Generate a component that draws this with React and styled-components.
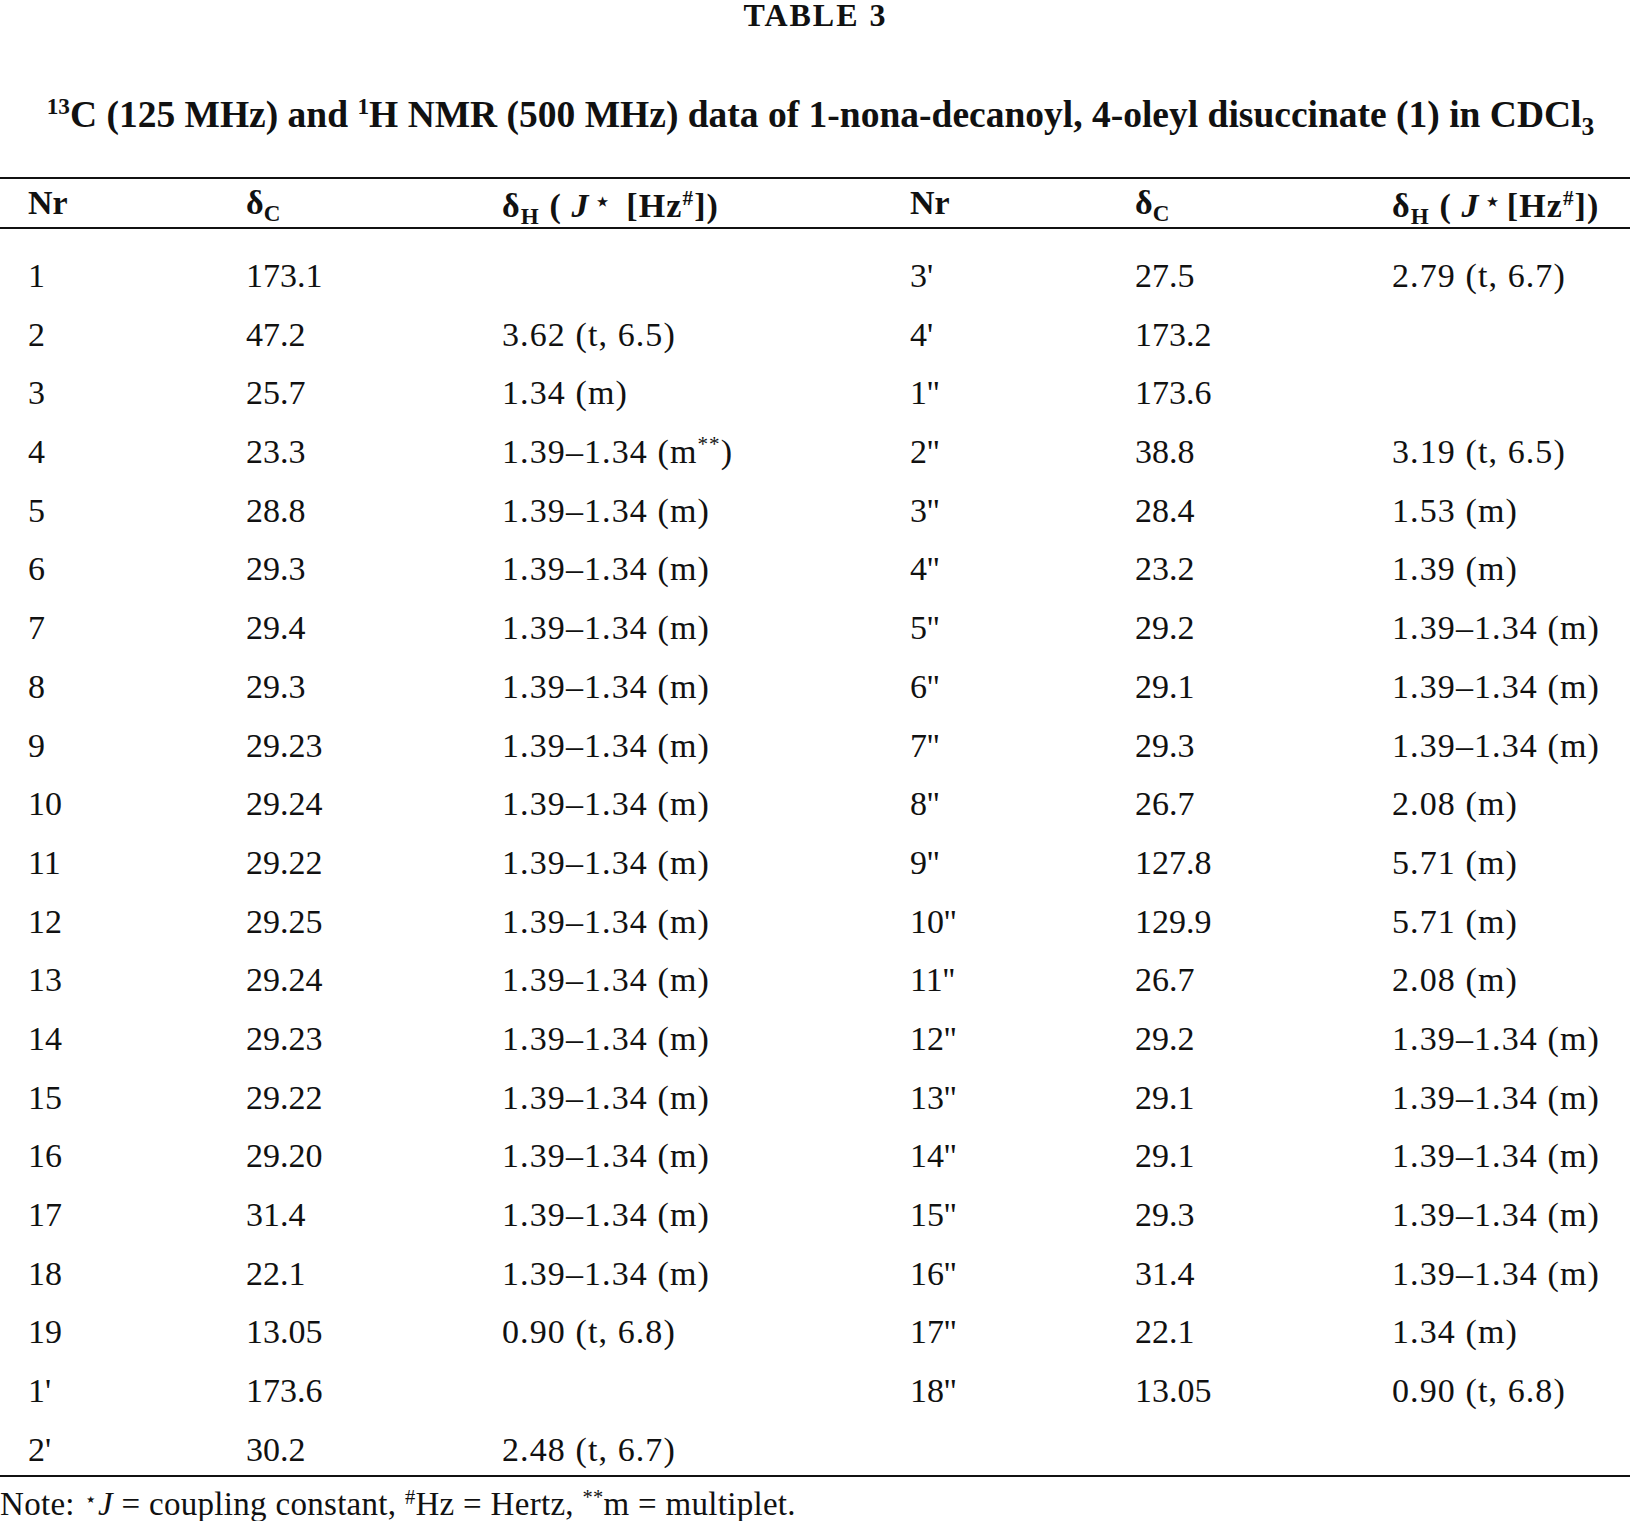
import React from "react";
import styled, { createGlobalStyle } from "styled-components";

const Global = createGlobalStyle`
  html, body { margin: 0; padding: 0; background: #fff; }
  body { font-family: "Liberation Serif", "Times New Roman", serif; color: #111; }
`;

const Page = styled.div`
  width: 1641px;
  display: flex;
  flex-direction: column;
`;

const Title = styled.div`
  text-align: center;
  font-weight: bold;
  font-size: 32px;
  line-height: 30px;
  padding-right: 10px;
  letter-spacing: 2px;
`;

const Caption = styled.div`
  text-align: center;
  font-weight: bold;
  font-size: 37.5px;
  line-height: 40px;
  margin-top: 65px;
  padding-right: 0px;
`;

const Table = styled.div`
  width: 1630px;
  margin-top: 42px;
  border-top: 2px solid #111;
  border-bottom: 2px solid #111;
`;

const Row = styled.div`
  display: grid;
  grid-template-columns: 218px 256px 408px 225px 257px 1fr;
  padding-left: 28px;
  height: ${(p) => (p.$head ? "48px" : "58.7px")};
  align-items: ${(p) => (p.$head ? "center" : "start")};
  line-height: 40px;
  font-size: 34px;
  font-weight: ${(p) => (p.$head ? "bold" : "normal")};
  white-space: nowrap;
  &:last-child {
    height: ${(p) => (p.$head ? "48px" : "45px")};
  }
`;

const Cell = styled.span`
  letter-spacing: ${(p) => (p.$wide ? "1.1px" : "0")};
`;

const Head = styled.div`
  border-bottom: 2px solid #111;
`;

const Body = styled.div`
  padding-top: 27px;
`;

const Sub = styled.sub`
  font-size: 0.68em;
  vertical-align: -0.3em;
  line-height: 0;
`;

const Sup = styled.sup`
  font-size: 0.62em;
  vertical-align: 0.55em;
  line-height: 0;
`;

const Ital = styled.i`
  font-style: italic;
`;

const Star = styled.span`
  font-size: ${(p) => (p.$big ? "0.85em" : "0.6em")};
  vertical-align: ${(p) => (p.$big ? "0.2em" : "0.45em")};
  font-weight: normal;
  font-family: "DejaVu Sans", sans-serif;
  margin: ${(p) => (p.$big ? "0 4px" : "0 1px")};
`;

const Note = styled.div`
  font-size: 33px;
  line-height: 34px;
  margin-top: 6px;
  letter-spacing: 0.3px;
`;

const rows = [
  ["1", "173.1", "", "3'", "27.5", "2.79 (t, 6.7)"],
  ["2", "47.2", "3.62 (t, 6.5)", "4'", "173.2", ""],
  ["3", "25.7", "1.34 (m)", "1''", "173.6", ""],
  ["4", "23.3", "M", "2''", "38.8", "3.19 (t, 6.5)"],
  ["5", "28.8", "1.39–1.34 (m)", "3''", "28.4", "1.53 (m)"],
  ["6", "29.3", "1.39–1.34 (m)", "4''", "23.2", "1.39 (m)"],
  ["7", "29.4", "1.39–1.34 (m)", "5''", "29.2", "1.39–1.34 (m)"],
  ["8", "29.3", "1.39–1.34 (m)", "6''", "29.1", "1.39–1.34 (m)"],
  ["9", "29.23", "1.39–1.34 (m)", "7''", "29.3", "1.39–1.34 (m)"],
  ["10", "29.24", "1.39–1.34 (m)", "8''", "26.7", "2.08 (m)"],
  ["11", "29.22", "1.39–1.34 (m)", "9''", "127.8", "5.71 (m)"],
  ["12", "29.25", "1.39–1.34 (m)", "10''", "129.9", "5.71 (m)"],
  ["13", "29.24", "1.39–1.34 (m)", "11''", "26.7", "2.08 (m)"],
  ["14", "29.23", "1.39–1.34 (m)", "12''", "29.2", "1.39–1.34 (m)"],
  ["15", "29.22", "1.39–1.34 (m)", "13''", "29.1", "1.39–1.34 (m)"],
  ["16", "29.20", "1.39–1.34 (m)", "14''", "29.1", "1.39–1.34 (m)"],
  ["17", "31.4", "1.39–1.34 (m)", "15''", "29.3", "1.39–1.34 (m)"],
  ["18", "22.1", "1.39–1.34 (m)", "16''", "31.4", "1.39–1.34 (m)"],
  ["19", "13.05", "0.90 (t, 6.8)", "17''", "22.1", "1.34 (m)"],
  ["1'", "173.6", "", "18''", "13.05", "0.90 (t, 6.8)"],
  ["2'", "30.2", "2.48 (t, 6.7)", "", "", ""],
];

const cell = (v, j) => {
  const wide = j === 2 || j === 5;
  return v === "M" ? (
    <Cell $wide={wide}>
      1.39–1.34 (m<Sup>**</Sup>)
    </Cell>
  ) : (
    <Cell $wide={wide}>{v}</Cell>
  );
};

export default function App() {
  return (
    <Page>
      <Global />
      <Title>TABLE 3</Title>
      <Caption>
        <Sup>13</Sup>C (125 MHz) and <Sup>1</Sup>H NMR (500 MHz) data of 1-nona-decanoyl, 4-oleyl disuccinate (1) in CDCl<Sub>3</Sub>
      </Caption>
      <Table>
        <Head>
          <Row $head>
            <Cell>Nr</Cell>
            <Cell>
              δ<Sub>C</Sub>
            </Cell>
            <Cell $wide>
              δ<Sub>H</Sub> ( <Ital>J</Ital>
              <Star $big>⋆</Star> [Hz<Sup>#</Sup>])
            </Cell>
            <Cell>Nr</Cell>
            <Cell>
              δ<Sub>C</Sub>
            </Cell>
            <Cell $wide>
              δ<Sub>H</Sub> ( <Ital>J</Ital>
              <Star $big>⋆</Star>[Hz<Sup>#</Sup>])
            </Cell>
          </Row>
        </Head>
        <Body>
          {rows.map((r, i) => (
            <Row key={i}>
              {r.map((c, j) => (
                <React.Fragment key={j}>{cell(c, j)}</React.Fragment>
              ))}
            </Row>
          ))}
        </Body>
      </Table>
      <Note>
        Note: <Star>⋆</Star>
        <Ital>J</Ital> = coupling constant, <Sup>#</Sup>Hz = Hertz, <Sup>**</Sup>m = multiplet.
      </Note>
    </Page>
  );
}
